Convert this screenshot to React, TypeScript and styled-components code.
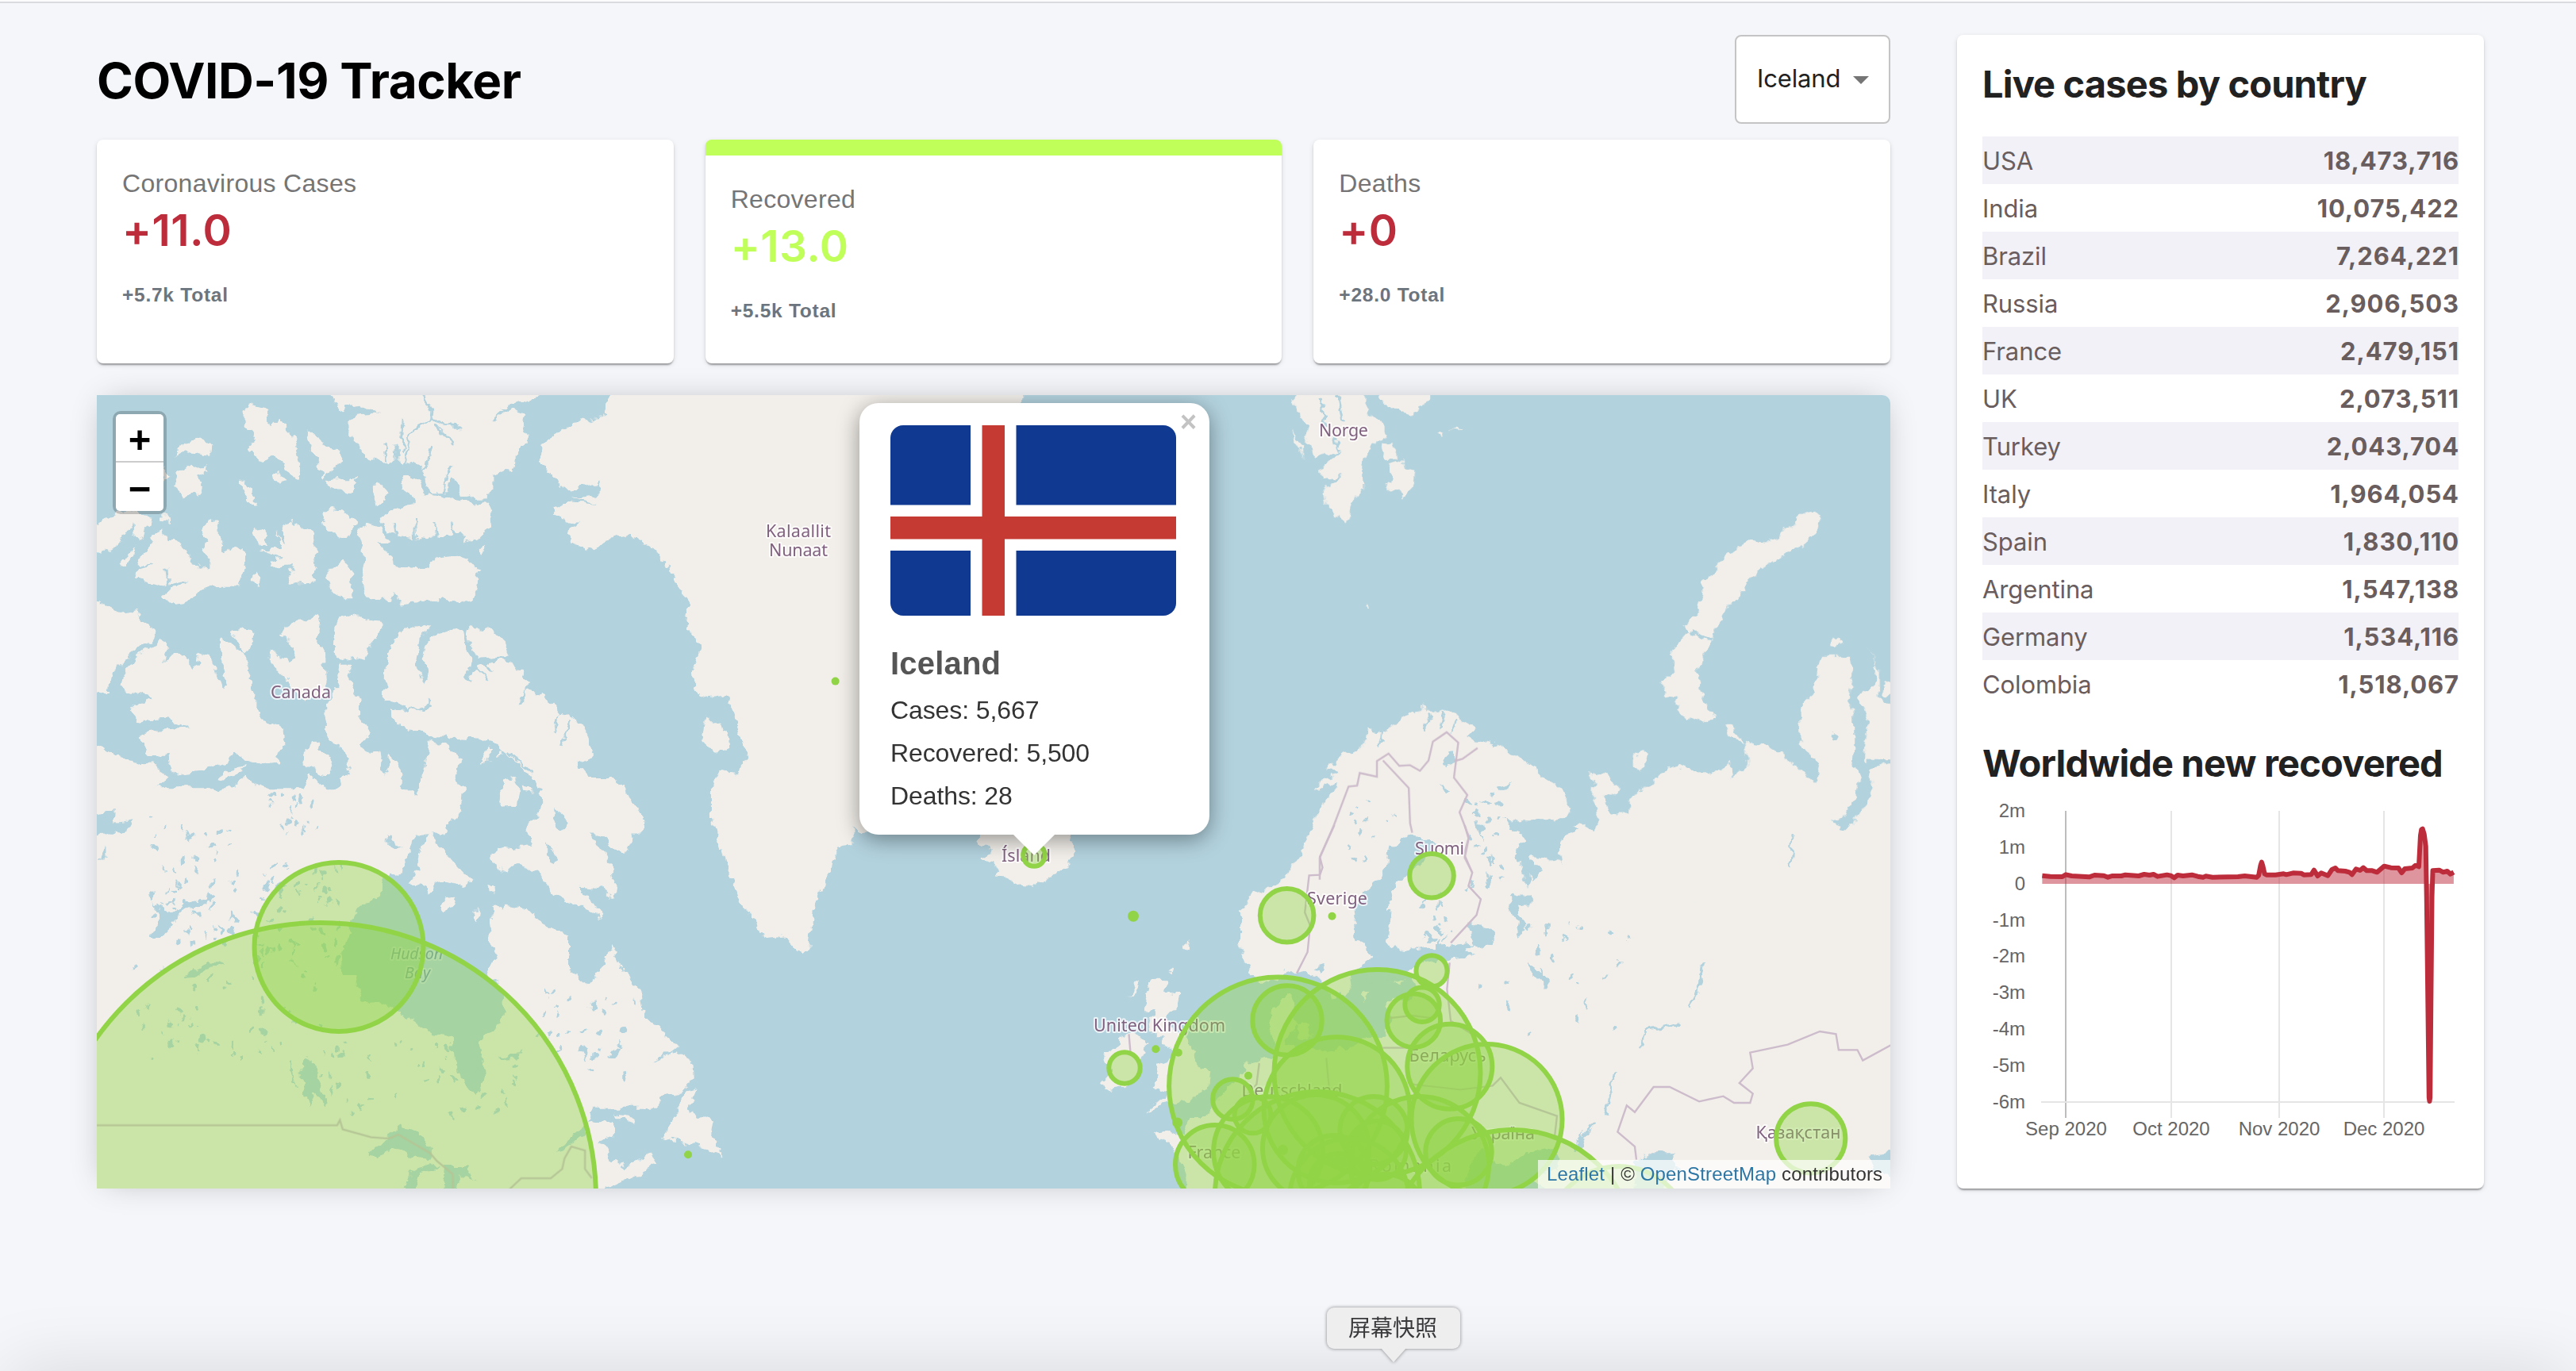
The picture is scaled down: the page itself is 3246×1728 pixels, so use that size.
import React from "react";
import styled, { createGlobalStyle } from "styled-components";

const SANS = `"Liberation Sans", Arial, sans-serif`;
const UI = `Inter, "Liberation Sans", sans-serif`;
const GREEN = "#92d447";
const CRIMSON = "#bd2c3b";

const GlobalStyle = createGlobalStyle`
  * { box-sizing: border-box; }
  body { margin: 0; background: #f5f6fa; }
`;

const Page = styled.div`
  position: relative;
  height: 1728px;
  overflow: hidden;
  background: #f5f6fa;
  font-family: ${SANS};
`;

const TopEdge = styled.div`
  height: 4px;
  border-top: 2px solid #fbfbfc;
  background: #d9dbdf;
`;

const Columns = styled.div`
  display: flex;
  gap: 84px;
  padding: 40px 116px 0 122px;
`;

const Main = styled.main`
  display: flex;
  flex-direction: column;
  width: 2260px;
`;

const Header = styled.header`
  display: flex;
  align-items: center;
  justify-content: space-between;
  height: 112px;
  margin-bottom: 20px;
`;

const Title = styled.h1`
  margin: 4px 0 0;
  font: 700 62px/76px ${UI};
  letter-spacing: -0.45px;
  color: #000;
`;

const CountrySelect = styled.button`
  display: flex;
  align-items: center;
  justify-content: space-between;
  width: 196px;
  height: 112px;
  padding: 0 25px 2px 26px;
  border: 2px solid #c4c4c4;
  border-radius: 8px;
  background: #fff;
  color: #212121;
  font: 400 31px/38px ${UI};
  letter-spacing: -0.15px;
`;

const Caret = styled.span`
  margin-top: 3px;
  border: 10px solid transparent;
  border-top-color: #757575;
  border-bottom: 0;
`;

const Cards = styled.section`
  display: grid;
  grid-template-columns: repeat(3, 1fr);
  gap: 40px;
  height: 282px;
  margin-bottom: 40px;
`;

const surface = `
  background: #fff;
  border-radius: 8px;
  box-shadow: 0 4px 2px -2px rgba(0,0,0,.2), 0 2px 2px rgba(0,0,0,.14), 0 2px 6px rgba(0,0,0,.12);
`;

const Card = styled.article<{ $selected?: boolean }>`
  ${surface}
  padding: 32px;
  border-top: ${(p) => (p.$selected ? "20px solid #c0ff5a" : "0")};
`;

const CardLabel = styled.div`
  font-size: 32px;
  line-height: 46px;
  letter-spacing: 0.3px;
  color: #757575;
`;

const CardNumber = styled.div<{ $color: string }>`
  font: 600 55px/72px ${UI};
  letter-spacing: 0.5px;
  color: ${(p) => p.$color};
`;

const CardTotal = styled.div`
  margin-top: 30px;
  font-size: 24.5px;
  font-weight: 700;
  line-height: 32px;
  letter-spacing: 0.75px;
  color: #6c757d;
`;

const MapFrame = styled.section`
  position: relative;
  height: 1000px;
  border-radius: 0 10px 0 0;
  box-shadow: 0 0 40px -12px rgba(0, 0, 0, 0.3);
`;

const MapClip = styled.div`
  position: relative;
  height: 1000px;
  overflow: hidden;
  border-radius: 0 10px 0 0;
  background: #b2d2de;
`;

const MapSvg = styled.svg`
  display: block;
  width: 2260px;
  height: 1000px;
`;

const ZoomBox = styled.div`
  position: absolute;
  left: 20px;
  top: 20px;
  width: 68px;
  border: 4px solid rgba(0, 0, 0, 0.2);
  border-radius: 10px;
  background-clip: padding-box;
`;

const ZoomButton = styled.button`
  display: block;
  width: 60px;
  height: 61px;
  padding: 4px 0 0;
  border: 0;
  background: #fff;
  color: #000;
  font: 700 49px/56px ${SANS};
  text-align: center;
  &:first-child {
    border-bottom: 2px solid #ccc;
    border-radius: 5px 5px 0 0;
  }
  &:last-child {
    border-radius: 0 0 5px 5px;
  }
`;

const Popup = styled.div`
  position: absolute;
  left: 961px;
  top: 10px;
  width: 441px;
  height: 544px;
  padding: 28px 39px;
  border-radius: 24px;
  background: #fff;
  box-shadow: 0 6px 28px rgba(0, 0, 0, 0.4);
  color: #333;
  font-size: 32px;
  &::after {
    content: "";
    position: absolute;
    left: 193px;
    top: 543px;
    border: 27px solid transparent;
    border-top-color: #fff;
    border-bottom: 0;
  }
`;

const Flag = styled.svg`
  display: block;
  width: 360px;
  height: 240px;
  border-radius: 16px;
`;

const PopupName = styled.div`
  margin-top: 36px;
  font-size: 40px;
  font-weight: 700;
  line-height: 48px;
  letter-spacing: 0.2px;
  color: #555;
`;

const PopupLine = styled.div`
  height: 54px;
  padding-top: 14px;
  line-height: 43px;
  letter-spacing: -0.1px;
`;

const PopupClose = styled.span`
  position: absolute;
  right: 16px;
  top: 6px;
  color: #c3c3c3;
  font: 700 36px/36px ${SANS};
`;

const Attribution = styled.div`
  position: absolute;
  right: 0;
  bottom: 0;
  height: 36px;
  width: 444px;
  padding-left: 11px;
  background: rgba(255, 255, 255, 0.7);
  color: #333;
  font-size: 24px;
  line-height: 36px;
  letter-spacing: 0.15px;
  white-space: nowrap;
  a { color: #2c76a5; text-decoration: none; }
`;

const Side = styled.aside`
  ${surface}
  width: 664px;
  height: 1454px;
  padding: 32px;
`;

const SideTitle = styled.h3`
  margin: 0;
  font: 700 47px/60px ${UI};
  letter-spacing: -0.84px;
  color: #212121;
  white-space: nowrap;
`;

const Table = styled.div`
  display: flex;
  flex-direction: column;
  margin: 36px 0 40px;
`;

const Row = styled.div`
  display: flex;
  align-items: center;
  justify-content: space-between;
  height: 60px;
  padding-top: 2px;
  color: #6a5d5d;
  font: 400 31px/40px ${UI};
  letter-spacing: -0.1px;
  &:nth-child(odd) { background: #f2f1f7; }
`;

const Count = styled.strong`
  margin-right: -1px;
  font-weight: 700;
  letter-spacing: 0.9px;
`;

const Chart = styled.svg`
  display: block;
  width: 600px;
  height: 440px;
  margin-top: 12px;
`;

const DockShade = styled.div`
  position: absolute;
  left: 30px;
  right: 30px;
  bottom: -60px;
  height: 40px;
  box-shadow: 0 0 90px 20px rgba(0, 0, 0, 0.13);
`;

const DockTip = styled.div`
  position: absolute;
  left: 1672px;
  top: 1648px;
  width: 168px;
  height: 52px;
  padding-right: 2px;
  border-radius: 9px;
  background: #eeeeef;
  filter: drop-shadow(0 0 2px rgba(0, 0, 0, 0.45));
  color: #3a3a3c;
  font: 400 28px/48px "Noto Sans CJK SC", sans-serif;
  text-align: center;
  &::after {
    content: "";
    position: absolute;
    left: 68px;
    top: 51px;
    border: 16px solid transparent;
    border-top: 18px solid #eeeeef;
    border-bottom: 0;
  }
`;

/* Map geometry: each sheet has its own origin and scale. */
type Sheet = { at: string; land: string[]; water?: string[]; channels?: string[]; borders?: string[] };

const sheets: Sheet[] = [
  {
    at: "translate(100 480) scale(.5102 .35714)",
    land: [
      "625,0 625,80 645,108 670,82 700,95 740,118 680,125 660,155 672,205 690,240 715,278 750,290 780,285 810,290 845,300 855,340 865,390 885,405 910,390 918,340 935,360 945,400 965,418 1005,415 1022,380 1022,330 1060,325 1080,290 1085,240 1105,195 1095,150 1100,120 1040,95 1130,60 1130,0",
      "795,340 820,328 845,355 855,400 910,410 960,425 1000,430 1022,460 1020,505 990,550 950,575 955,545 900,540 860,552 800,545 760,535 742,490 770,465 790,440 825,435 820,405 800,385",
      "725,370 745,365 760,395 750,430 735,435 725,400",
      "405,95 435,85 465,110 468,160 490,135 510,180 535,210 540,270 552,310 545,340 525,340 505,290 485,265 460,280 430,270 418,235 440,210 425,180 405,150",
      "475,330 490,325 508,350 485,357",
      "565,180 590,195 605,230 645,255 640,300 600,340 590,300 570,240",
      "615,350 635,345 680,345 680,392 620,390",
      "235,265 255,230 295,192 322,220 320,265 295,262 255,250",
      "238,330 270,300 315,297 310,325 290,335 305,365 300,395 262,410 240,380",
      "205,300 224,340 208,360",
      "395,348 410,355 430,410 438,442 420,430 405,390",
      "0,560 60,490 90,470 130,460 175,475 172,505 150,560 132,545 130,490 110,550 80,610 0,600",
      "200,480 228,478 225,498 200,495",
      "115,620 140,580 130,625 118,658 98,648",
      "178,545 205,528 215,560 240,560 270,600 278,650 330,660 330,625 305,600 320,570 300,545 315,510 330,482 342,510 348,580 355,600 380,588 405,600 410,640 400,700 385,730 345,730 325,725 290,745 260,790 230,795 208,765 225,735 270,705 250,705 200,725 175,715 137,695 145,665 180,650 148,645 155,605 185,580",
      "430,505 460,540 460,555 470,570 440,580",
      "485,540 510,580 500,510 540,495 560,515 580,530 582,620 585,650 575,690 580,718 525,722 520,680 530,650 470,655 475,630 500,620 450,600 480,590 500,600",
      "605,700 620,660 650,643 672,675 675,765 655,765 625,740",
      "421,715 422,690 435,668 448,690 445,718",
      "600,465 625,450 660,465 682,500 665,555 640,550 610,520",
      "685,520 720,505 745,520 750,545 770,560 760,575 735,570 765,620 775,655 830,660 845,665 890,625 930,618 965,630 985,670 980,700 988,735 970,745 970,775 935,785 900,765 860,780 790,788 780,745 770,775 720,765 705,735 698,690 705,640 700,590",
      "985,605 1000,580 1000,605 990,618",
      "0,775 60,780 100,820 140,810 188,895 150,940 105,995 75,1050 72,1100 0,1130",
      "205,912 218,935 210,1000 235,955 275,985 275,1020 300,1000 290,955 320,970 340,1020 352,1090 365,1080 345,980 345,920 370,925 410,965 430,1100 430,1150 460,1195 505,1240 510,1285 480,1320 490,1350 450,1360 410,1345 385,1310 370,1345 310,1375 230,1390 220,1325 175,1320 145,1275 145,1250 200,1228 270,1222 210,1192 145,1200 120,1160 180,1120 105,1090 110,1040 120,1000 160,955",
      "375,885 410,868 430,890 428,930 412,965 390,915",
      "497,900 515,855 545,850 580,830 598,865 590,925 605,945 610,1075 600,1115 555,1130 525,1075 495,1030 470,990 470,950 485,948 515,1000 535,980 520,930",
      "632,860 640,830 675,822 710,840 748,850 705,985 670,975 640,985 628,960",
      "640,993 675,993 665,1050 690,1120 690,1180 715,1240 690,1290 740,1320 750,1400 770,1325 800,1380 795,1440 815,1500 840,1430 855,1350 860,1270 900,1280 945,1330 930,1400 948,1480 930,1540 900,1600 620,1600 640,1520 630,1450 670,1370 650,1300 610,1260 608,1150 635,1090",
      "545,1345 575,1265 600,1300 630,1350 615,1390 570,1370",
      "752,1125 755,1020 770,930 800,880 840,858 868,870 840,910 830,990 840,1050 870,1120 855,1145 810,1165 790,1135",
      "765,1160 810,1170 870,1150 850,1075 860,1050 848,960 860,910 920,875 948,875 955,940 970,985 955,1055 990,1010 1020,1020 1008,1005 1040,980 1080,1005 1105,1060 1100,1090 1140,1100 1170,1135 1190,1170 1235,1205 1260,1270 1270,1330 1230,1350 1260,1400 1310,1440 1345,1500 1390,1540 1390,1600 1115,1600 1148,1500 1130,1420 1100,1370 1060,1320 1030,1280 990,1265 930,1260 850,1250 790,1220",
      "958,870 1020,880 1050,925 1060,970 990,980 965,940",
      "1037,1480 1045,1415 1075,1405 1088,1440 1080,1495 1045,1500",
      "1095,1430 1120,1440 1120,1455 1097,1450",
      "990,1350 1012,1290 1010,1330",
      "1035,1330 1045,1305 1050,1325",
      "0,1250 70,1300 120,1340 180,1355 218,1395 190,1440 240,1460 300,1440 335,1500 355,1540 360,1470 380,1430 410,1395 440,1430 490,1460 545,1450 570,1395 605,1430 640,1540 700,1700 0,1700",
      "340,1405 370,1370 405,1358 400,1385 350,1410",
      "1325,0 1290,130 1225,145 1140,230 1138,290 1170,340 1205,385 1285,360 1285,400 1225,415 1285,435 1200,425 1170,450 1200,500 1240,500 1205,540 1230,580 1275,605 1300,570 1350,545 1420,590 1450,640 1470,700 1505,790 1500,850 1545,940 1515,990 1520,1080 1540,1125 1600,1110 1700,0",
    ],
    channels: [
      "850,50 872,110 870,135 820,180 800,290", "870,135 905,160 940,165", "880,160 925,220", "862,400 850,330 870,230",
      "918,300 895,400 865,400", "800,130 795,260", "752,220 760,280", "780,225 782,285", "205,440 260,560",
      "1070,80 1020,140", "1170,1240 1190,1180", "1190,1290 1215,1200", "1090,1140 1100,1090", "780,500 785,550", "830,490 832,550", "880,490 880,550", "920,500 925,545",
      "220,720 215,660", "955,1060 970,1000 1010,1060", "1060,1310 1120,1380",
    ],
  },
  {
    at: "translate(100 1000) scale(.57398 .33333)",
    land: [
      "-60,-20 720,-20 760,40 740,-20 845,-20 840,30 800,120 770,110 740,150 725,220 700,310 665,320 655,390 610,430 590,520 575,600 580,690 605,690 620,795 655,785 690,820 740,870 770,905 820,915 825,1040 870,1140 890,1090 885,1000 875,935 920,880 935,820 930,740 895,690 915,620 900,560 910,520 905,430 930,425 985,435 1020,500 1075,540 1075,660 1120,720 1155,650 1170,570 1200,690 1235,760 1240,840 1315,950 1300,970 1345,1010 1348,1080 1330,1120 1280,1150 1265,1190 1130,1190 1115,1240 1170,1245 1175,1290 1140,1310 1165,1380 1200,1420 1250,1360 1265,1400 1240,1430 1150,1500 1150,1600 -60,1600",
      "1280,1310 1310,1210 1330,1130 1355,1120 1335,1200 1390,1240 1385,1290 1400,1320 1405,1370 1380,1340 1350,1330 1330,1320",
      "740,250 755,170 770,150 800,210 830,280 860,330 845,350 800,330 785,340 765,380 755,345 725,340 745,290",
      "1020,-60 1015,60 980,130 995,195 960,210 920,200 905,240 910,285 935,298 970,270 1010,310 1040,380 1090,420 1150,475 1130,420 1095,350 1150,360 1175,400 1180,330 1160,250 1120,150 1130,130 1195,240 1215,170 1210,120 1238,95 1180,-60",
      "920,-20 960,-20 965,30 930,45",
      "790,430 800,400 830,395 820,430 800,450",
      "865,440 880,440 875,490 862,475",
      "898,350 910,355 912,380 900,372",
      "1178,1208 1210,1220 1225,1250 1200,1240",
    ],
    water: [
      "630,1370 660,1320 710,1260 740,1275 775,1340 775,1385 720,1370 690,1350 650,1375",
      "495,990 515,1010 525,1080 542,1140 540,1185 520,1130 505,1190 490,1100 488,1020",
      "715,1500 725,1430 770,1405 790,1412 745,1440 735,1500",
      "800,1500 805,1410 850,1410 870,1470 830,1440 835,1500",
      "150,540 180,475 165,410 150,390 200,460 260,395 290,405 225,450 200,500 190,540",
      "-10,100 60,70 80,70 75,110 120,100 105,150 60,145 20,170",
      "230,700 260,660 290,635 320,650 275,665 250,695",
      "1050,1360 1080,1290 1115,1240 1105,1300 1070,1340",
      "1040,60 1075,110 1060,150 1045,120", "1030,190 1055,250 1040,265 1030,230",
      "670,165 715,205 690,205", "60,240 45,250 60,200",
      "460,1010 470,1080 480,1130 460,1060", "920,995 970,980 960,1000 925,1005",
      "1160,990 1190,960 1180,1000", "1260,1010 1310,960 1290,995",
      "430,350 450,340 440,400", "610,1170 630,1180 615,1190",
    ],
    borders: [
      "-30,1255 566,1255 572,1235 578,1270 620,1290 640,1300 680,1305 700,1290 770,1360 785,1390 820,1440 820,1520",
      "930,1520 970,1455 1035,1455 1060,1420 1065,1380 1080,1335 1110,1350 1110,1420 1125,1455",
    ],
  },
  {
    at: "translate(800 480) scale(.5102)",
    land: [
      "-20,-20 -10,385 0,392 60,420 85,450 100,500 130,540 135,620 165,660 160,700 145,760 185,785 195,720 230,790 255,850 262,900 280,935 255,970 210,960 190,1000 190,1080 215,1150 235,1220 270,1300 320,1380 370,1375 410,1420 430,1400 445,1290 480,1220 500,1150 540,1140 540,1100 560,1120 590,1110 620,1000 700,900 900,400 955,60 955,-20",
      "175,830 225,865 230,910 200,925 165,890",
      "845,1140 860,1100 1060,1110 1085,1150 1080,1180 1050,1210 1015,1230 990,1250 950,1245 920,1230 882,1228 905,1205 855,1180 890,1165",
    ],
  },
  {
    at: "translate(1560 480) scale(.5421 .39541)",
    land: [
      "100,1640 120,1568 140,1520 165,1440 185,1370 215,1320 230,1280 175,1300 190,1270 240,1250 205,1240 240,1195 290,1165 300,1110 350,1120 370,1080 410,1060 440,1035 455,1060 490,1040 510,1070 555,1105 530,1135 595,1160 650,1195 700,1250 760,1310 770,1370 750,1420 715,1438 650,1415 590,1370 620,1420 635,1460 640,1520 650,1560 690,1640",
      "690,1720 670,1510 700,1510 750,1540 740,1480 790,1405 830,1440 835,1380 825,1340 830,1270 815,1245 865,1255 883,1308 850,1330 865,1380 905,1380 910,1330 960,1290 985,1250 1040,1220 1060,1250 1110,1250 1145,1220 1150,1265 1185,1225 1175,1150 1230,1160 1300,1225 1340,1280 1355,1220 1310,1170 1305,1040 1340,1000 1355,880 1425,880 1430,930 1415,1010 1430,1070 1430,1220 1448,1260 1430,1340 1400,1400 1370,1405 1420,1425 1450,1370 1475,1300 1465,1240 1520,1220 1600,1220 1600,1720",
      "1440,1010 1480,960 1485,900 1465,850 1490,920 1490,1010 1520,1030 1600,1030 1600,1210 1455,1205 1465,1090",
      "1500,1000 1505,960 1560,950 1560,1010", "1375,850 1385,815 1408,840",
      "920,1230 920,1195 938,1175 958,1200 935,1240", "1135,1100 1150,1100 1172,1155 1140,1130",
      "1350,440 1345,490 1300,535 1210,600 1170,680 1130,740 1100,820 1085,870 1070,920 1075,990 1110,1075 1090,1085 1040,1070 1015,1030 1025,1000 995,1005 985,950 1010,940 1005,880 1025,830 1045,800 1035,785 1070,740 1080,680 1080,640 1100,620 1115,590 1140,550 1185,505 1230,515 1285,470 1300,430 1330,415",
      "130,-20 130,60 140,115 165,140 155,200 180,250 215,230 240,235 190,275 195,315 250,300 200,340 205,390 250,460 270,370 290,340 290,270 305,210 330,190 350,170 330,130 300,100 300,-20",
      "125,150 145,200 157,250 135,200", "315,-20 325,60 340,80 400,105 445,70 445,-20", "330,205 360,200 370,245 345,245",
      "345,265 385,248 390,290 412,295 405,345 380,380 380,340 345,355 355,300", "458,165 470,170 468,188", "490,158 510,143 525,155 505,152", "299,708 308,710 305,722",
    ],
    channels: ["190,45 205,140", "232,45 245,130", "1050,800 1110,830", "430,1110 445,1060", "470,1110 480,1050", "500,1120 510,1080", "325,1170 335,1110", "235,230 225,180"],
    water: ["480,1210 500,1180 500,1220 485,1230", "600,1300 640,1280 610,1310", "570,1330 595,1340 580,1350", "550,1400 575,1420 560,1450", "470,1290 490,1305 480,1310", "1380,1120 1395,1130 1390,1150 1378,1145"],
    borders: [
      "190,1590 190,1520 222,1420 257,1293 277,1290 283,1250 323,1262 323,1212 350,1188 375,1227 400,1225 423,1243 443,1210 453,1150 485,1120 512,1153 502,1265 533,1320 515,1375 537,1455 527,1520 545,1568",
      "337,1210 397,1298 400,1410 405,1440", "503,1212 522,1205 557,1170",
    ],
  },
  {
    at: "translate(1380 1150) scale(.39541 .33333)",
    land: [
      "175,270 190,248 232,250 225,300 270,310 255,360 225,400 230,440 290,470 305,520 320,560 330,600 370,600 365,650 335,690 325,712 245,718 205,725 165,755 180,725 225,700 230,680 180,660 205,625 195,575 225,570 250,540 220,490 225,460 180,460 175,410 190,370 155,370 165,320",
      "125,275 145,255 130,310 110,325", "280,130 300,98 292,150", "228,225 242,210 240,232",
      "35,520 75,515 80,470 135,460 165,495 160,530 145,560 150,600 130,640 85,660 35,670 25,640 55,600 40,560",
      "190,830 240,822 285,855 275,800 300,780 330,780 365,750 400,690 450,640 480,570 560,550 570,500 555,440 565,360 625,310 640,430 600,500 740,525 800,510 870,475 920,470 945,400 930,340 960,320 1010,330 1030,290 1000,230 1050,180 1120,175 1210,160 1150,115 1100,120 1000,155 940,130 930,60 960,0 960,-20 3000,-60 3000,1200 280,1200 290,1000 270,930 240,870 195,855",
      "640,430 690,425 680,480 645,475", "850,300 872,290 850,350", "955,265 990,245 975,270", "890,130 905,130 900,150",
    ],
    water: ["1180,1050 1190,950 1240,900 1300,965 1400,900 1470,890 1480,960 1400,1000 1450,1060"],
  },
  {
    at: "translate(1340 1040) scale(.67604 .33333)",
    land: ["500,-60 470,60 440,130 415,200 355,260 330,330 330,440 345,560 370,600 430,555 455,545 480,590 500,650 530,640 540,560 572,500 610,480 690,460 760,450 770,380 830,300 900,-60"],
    water: [
      "640,40 665,45 690,70 670,150 625,210 605,290 610,360 605,430 625,480 700,460 765,445 730,500 660,520 640,570 570,600 555,540 572,490 545,420 540,300 575,230 605,150 610,80",
      "820,-20 860,50 840,100 850,150 875,200 890,170 865,110 920,130 930,50 960,20 940,-20",
      "755,370 795,390 803,440 780,475 760,440", "830,290 840,250 860,390 850,420", "860,520 880,540 903,580 895,610", "868,310 874,330",
      "1065,1280 1090,1240 1140,1240 1145,1290 1110,1410 1060,1410", "1500,1250 1560,1240 1560,1330 1510,1320", "470,540 485,530 480,560",
      "970,1150 965,1210 950,1230", "880,460 890,475 880,485", "775,590 782,600 772,608",
    ],
    channels: ["1190,530 1185,600 1170,690", "1150,750 1090,770 1070,850", "1030,930 1010,1100", "990,1130 955,1220", "900,370 905,430", "910,490 915,520", "975,655 975,700", "1360,30 1355,150"],
    borders: [
      "505,0 478,120 483,160 478,188 458,190 450,330 460,380 455,480 435,560", "748,0 755,50 747,110 762,180 755,230 778,280 770,340 722,445", "720,520 715,620 722,740 770,800",
      "1580,790 1490,890 1480,850 1445,850 1440,790 1410,780 1350,830 1280,860 1285,920 1260,975 1285,1015 1280,1050 1250,1050 1230,1025 1185,1045 1130,990 1100,990 1065,1085 1050,1060 1033,1160 1065,1215 1068,1265",
      "650,980 740,1000 800,985 815,955 850,1050 920,1100 915,1190", "595,842 650,842 660,880", "490,880 495,990 540,1030", "122,790 125,860", "605,730 650,720 690,730", "365,900 360,980 330,1050",
    ],
  },
];

const scatter = (seed: number, n: number, x: number, y: number, w: number, h: number) => {
  let s = seed;
  const next = () => (s = (s * 16807) % 2147483647) / 2147483647;
  return Array.from({ length: n }, () => ({
    x: x + next() * w, y: y + next() * h, rx: 1 + next() * 2.2, ry: 1 + next() * 4.5, a: next() * 70 - 35,
  }));
};

const ponds = [
  ...scatter(7, 60, 190, 1030, 110, 160), ...scatter(19, 50, 320, 1090, 110, 120), ...scatter(31, 50, 170, 1210, 240, 130),
  ...scatter(43, 45, 400, 1310, 260, 100), ...scatter(57, 30, 680, 1250, 120, 110), ...scatter(71, 22, 1790, 1120, 40, 70),
  ...scatter(83, 26, 1850, 1000, 45, 130), ...scatter(97, 12, 1700, 1000, 60, 90), ...scatter(103, 16, 1900, 1150, 160, 160), ...scatter(131, 18, 340, 1000, 60, 50),
];

const bubbles: number[][] = [
  [404, 1510, 347], [427, 1193.5, 106.5], [1621.6, 1153.8, 33.8], [1804, 1103.8, 27.8], [1804, 1223.8, 19.6], [1610.5, 1369, 137.4],
  [1735.5, 1352, 130], [1622, 1286, 43.7], [1792, 1266.3, 21.7], [1781.3, 1286.3, 33.8], [1826.8, 1344.3, 53.5], [1873.5, 1411, 95],
  [1684.5, 1399, 92], [1417, 1346, 19.7], [2281.7, 1434.8, 43.6], [1906, 1579, 155], [1553.4, 1385.5, 25.3], [1530.8, 1467.8, 49.8],
  [1578.5, 1405.3, 23], [1598, 1451, 68.8], [1660, 1505, 129], [1658, 1447, 67], [1731, 1424.7, 42.7], [1735, 1450, 37],
  [1789, 1469, 87], [1838, 1451.8, 41.7], [1680.5, 1476, 45], [1686, 1490, 36], [1700, 1510, 75], [1745, 1530, 50], [1303, 1078, 13.8],
  [2040, 1560, 90],
];

const dots: number[][] = [
  [1678.5, 1154.7, 5], [1456.3, 1322.3, 5], [1484.8, 1326.7, 5], [1573, 1355.7, 5], [1483.6, 1415, 6.5], [1616.5, 1449.3, 6.5], [1428, 1154.7, 7], [1052.6, 858.6, 5], [867, 1455.3, 5],
];

const labels: [string, number, number, number][] = [
  ["Canada", 379, 880, 76], ["Kalaallit", 1006, 677, 82], ["Nunaat", 1006, 701, 74], ["Norge", 1693, 550, 62], ["Suomi", 1814, 1077, 62],
  ["Sverige", 1685, 1140, 76], ["United Kingdom", 1461, 1300, 166], ["Беларусь", 1824, 1338, 97], ["Deutschland", 1628, 1382, 127],
  ["France", 1530, 1460, 67], ["Україна", 1894, 1436, 80], ["Romania", 1777, 1477, 104], ["Қазақстан", 2266, 1435, 107], ["Ísland", 1293, 1086, 62],
];

const WorldMap = () => (
  <MapSvg viewBox="122 498 2260 1000">
    <defs>
      <filter id="coast" filterUnits="userSpaceOnUse" x="60" y="440" width="2400" height="1130">
        <feTurbulence type="fractalNoise" baseFrequency="0.07" numOctaves="3" seed="4" />
        <feDisplacementMap in="SourceGraphic" scale="15" xChannelSelector="R" yChannelSelector="G" />
      </filter>
    </defs>
    <g filter="url(#coast)">
      {sheets.map((s, i) => (
        <g key={i} transform={s.at} fill="#f2efea">
          {s.land.map((p, j) => <polygon key={j} points={p} />)}
        </g>
      ))}
      {sheets.map((s, i) => (
        <g key={i} transform={s.at}>
          {s.water?.map((p, j) => <polygon key={j} points={p} fill="#b2d2de" />)}
          {s.channels?.map((p, j) => (
            <polyline key={j} points={p} fill="none" stroke="#b2d2de" strokeWidth="3" vectorEffect="non-scaling-stroke" />
          ))}
        </g>
      ))}
      {ponds.map((p, i) => (
        <ellipse key={i} cx={p.x} cy={p.y} rx={p.rx} ry={p.ry} fill="#b2d2de" transform={`rotate(${p.a} ${p.x} ${p.y})`} />
      ))}
    </g>
    {sheets.map((s, i) => (
      <g key={i} transform={s.at} fill="none" stroke="#cdbccb">
        {s.borders?.map((p, j) => <polyline key={j} points={p} strokeWidth="2.4" vectorEffect="non-scaling-stroke" />)}
      </g>
    ))}
    <g fontFamily='"Noto Sans", "Open Sans", sans-serif' fontSize="21.5" textAnchor="middle" fill="#80617f" stroke="#fff" strokeOpacity=".75" strokeWidth="4" strokeLinejoin="round" style={{ paintOrder: "stroke" }}>
      {labels.map(([t, x, y, w]) => <text key={t} x={x} y={y} textLength={w}>{t}</text>)}
      <g fill="#6f94b0" strokeOpacity=".3" fontStyle="italic" fontSize="19.5">
        <text x="525" y="1209" textLength="66">Hudson</text>
        <text x="526" y="1233" textLength="32">Bay</text>
      </g>
    </g>
    <g fill={GREEN} fillOpacity=".4" stroke={GREEN} strokeWidth="6">
      {bubbles.map(([x, y, r], i) => <circle key={i} cx={x} cy={y} r={r} />)}
    </g>
    <g fill={GREEN}>
      {dots.map(([x, y, r], i) => <circle key={i} cx={x} cy={y} r={r} />)}
    </g>
  </MapSvg>
);

const line =
  "10,251 40,254 85,255 98,247 120,252 185,256 205,249 240,251 255,257 270,252 305,252 320,248 370,252 390,246 410,249 425,246 440,254 475,248 490,251 502,259 515,249 535,252 568,248 590,254 610,257 620,253 645,257 740,255 765,252 810,257 817,250 824,212 828,200 832,212 839,244 846,248 880,248 910,244 920,247 945,241 975,242 985,248 1013,247 1023,230 1037,252 1050,241 1075,251 1090,228 1103,222 1112,232 1140,234 1155,238 1165,247 1180,226 1195,231 1207,221 1220,232 1240,232 1258,238 1285,215 1310,221 1338,222 1350,240 1362,225 1390,222 1402,212 1414,217 1420,100 1424,76 1428,74 1434,94 1440,140 1443,330 1452,1090 1454,1104 1456,1090 1463,330 1466,232 1490,230 1505,238 1520,234 1532,245 1544,238";

const HistoryChart = () => (
  <Chart viewBox="2498 1004 600 440">
    <g strokeWidth="2">
      <path d="M2603 1022V1409" stroke="#bdbdbd" />
      <path d="M2736 1022V1409M2872 1022V1409M3004 1022V1409M2572 1389H3093" stroke="#e5e5e5" />
    </g>
    <g transform="translate(2570 1020) scale(.33801 .33333)">
      <polygon points={`10,282 ${line} 1544,282`} fill={CRIMSON} fillOpacity=".5" />
      <polyline points={line} fill="none" stroke={CRIMSON} strokeWidth="6" strokeLinejoin="round" vectorEffect="non-scaling-stroke" />
    </g>
    <g fontFamily={SANS} fontSize="24" fill="#666">
      {["2m", "1m", "0", "-1m", "-2m", "-3m", "-4m", "-5m", "-6m"].map((t, i) => (
        <text key={t} x="2552" y={1030 + i * 45.85} textAnchor="end">{t}</text>
      ))}
      {([["Sep 2020", 2603.5], ["Oct 2020", 2736], ["Nov 2020", 2872], ["Dec 2020", 3004]] as [string, number][]).map(([t, x]) => (
        <text key={t} x={x} y="1431" textAnchor="middle">{t}</text>
      ))}
    </g>
  </Chart>
);

const stats = [
  { label: "Coronavirous Cases", value: "+11.0", total: "+5.7k Total", color: CRIMSON },
  { label: "Recovered", value: "+13.0", total: "+5.5k Total", color: "#c0ff5a", selected: true },
  { label: "Deaths", value: "+0", total: "+28.0 Total", color: CRIMSON },
];

const countries = [
  ["USA", "18,473,716"], ["India", "10,075,422"], ["Brazil", "7,264,221"], ["Russia", "2,906,503"], ["France", "2,479,151"], ["UK", "2,073,511"],
  ["Turkey", "2,043,704"], ["Italy", "1,964,054"], ["Spain", "1,830,110"], ["Argentina", "1,547,138"], ["Germany", "1,534,116"], ["Colombia", "1,518,067"],
];

export default function App() {
  return (
    <Page>
      <GlobalStyle />
      <TopEdge />
      <Columns>
        <Main>
          <Header>
            <Title>COVID-19 Tracker</Title>
            <CountrySelect>Iceland<Caret /></CountrySelect>
          </Header>
          <Cards>
            {stats.map((s) => (
              <Card key={s.label} $selected={s.selected}>
                <CardLabel>{s.label}</CardLabel>
                <CardNumber $color={s.color}>{s.value}</CardNumber>
                <CardTotal>{s.total}</CardTotal>
              </Card>
            ))}
          </Cards>
          <MapFrame>
            <MapClip>
              <WorldMap />
              <ZoomBox>
                <ZoomButton>+</ZoomButton>
                <ZoomButton>−</ZoomButton>
              </ZoomBox>
              <Popup>
                <Flag viewBox="0 0 360 240">
                  <rect width="360" height="240" fill="#103a91" />
                  <path d="M101 0h57.500v240H101zM0 100.500h360V158H0z" fill="#fff" />
                  <path d="M115.500 0H144v240h-28.500zM0 115h360v28.500H0z" fill="#c63a34" />
                </Flag>
                <PopupName>Iceland</PopupName>
                <PopupLine>Cases: 5,667</PopupLine>
                <PopupLine>Recovered: 5,500</PopupLine>
                <PopupLine>Deaths: 28</PopupLine>
                <PopupClose>×</PopupClose>
              </Popup>
              <Attribution>
                <a>Leaflet</a> | © <a>OpenStreetMap</a> contributors
              </Attribution>
            </MapClip>
          </MapFrame>
        </Main>
        <Side>
          <SideTitle>Live cases by country</SideTitle>
          <Table>
            {countries.map(([name, count]) => (
              <Row key={name}>
                <span>{name}</span>
                <Count>{count}</Count>
              </Row>
            ))}
          </Table>
          <SideTitle>Worldwide new recovered</SideTitle>
          <HistoryChart />
        </Side>
      </Columns>
      <DockShade />
      <DockTip>屏幕快照</DockTip>
    </Page>
  );
}
